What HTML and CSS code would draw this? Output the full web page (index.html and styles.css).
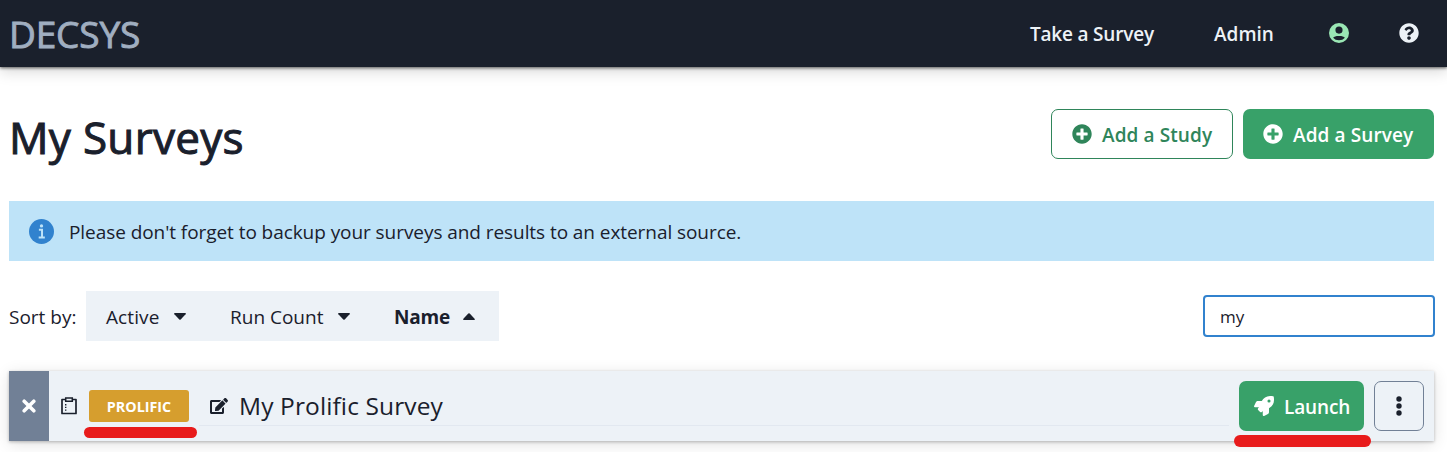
FILE: index.html
```html
<!DOCTYPE html>
<html lang="en">
<head>
<meta charset="utf-8">
<title>DECSYS</title>
<link rel="stylesheet" href="styles.css">
</head>
<body>
<header class="navbar">
  <a class="brand">DECSYS</a>
  <nav class="nav-links">
    <a class="nav-item take">Take a Survey</a>
    <a class="nav-item admin">Admin</a>
    <a class="nav-icon user"><svg class="icon20" viewBox="0 0 24 24"><path fill="currentColor" fill-rule="evenodd" d="M12 0a12 12 0 1 0 0 24 12 12 0 0 0 0-24zm0 4.200a4.300 4.300 0 1 1 0 8.600 4.300 4.300 0 0 1 0-8.600zM12 20.800c-3 0-5.300-1-7-3 1-1.500 3.200-2.200 7-2.200s6 .7 7 2.200c-1.700 2-4 3-7 3z"/></svg></a>
    <a class="nav-icon help"><svg class="icon20" viewBox="0 0 512 512"><path fill="currentColor" d="M504 256c0 136.997-111.043 248-248 248S8 392.997 8 256C8 119.083 119.043 8 256 8s248 111.083 248 248zM262.655 90c-54.497 0-89.255 22.957-116.549 63.758-3.536 5.286-2.353 12.415 2.715 16.258l34.699 26.310c5.205 3.947 12.621 3.008 16.665-2.122 17.864-22.658 30.113-35.797 57.303-35.797 20.429 0 45.698 13.148 45.698 32.958 0 14.976-12.363 22.667-32.534 33.976C247.128 238.528 216 254.941 216 296v4c0 6.627 5.373 12 12 12h56c6.627 0 12-5.373 12-12v-1.333c0-28.462 83.186-29.647 83.186-106.667 0-58.002-60.165-102-116.531-102zM256 338c-25.365 0-46 20.635-46 46 0 25.364 20.635 46 46 46s46-20.636 46-46c0-25.365-20.635-46-46-46z"/></svg></a>
  </nav>
</header>
<main class="page">
  <div class="title-row">
    <h1 class="title">My Surveys</h1>
    <div class="actions">
      <button class="btn btn-outline"><svg class="icon20" viewBox="0 0 512 512"><path fill="currentColor" d="M256 8C119 8 8 119 8 256s111 248 248 248 248-111 248-248S393 8 256 8zm144 276c0 6.600-5.400 12-12 12h-92v92c0 6.600-5.400 12-12 12h-56c-6.600 0-12-5.400-12-12v-92h-92c-6.600 0-12-5.400-12-12v-56c0-6.600 5.400-12 12-12h92v-92c0-6.600 5.400-12 12-12h56c6.600 0 12 5.400 12 12v92h92c6.600 0 12 5.400 12 12v56z"/></svg><span class="label-study">Add a Study</span></button>
      <button class="btn btn-solid"><svg class="icon20" viewBox="0 0 512 512"><path fill="currentColor" d="M256 8C119 8 8 119 8 256s111 248 248 248 248-111 248-248S393 8 256 8zm144 276c0 6.600-5.400 12-12 12h-92v92c0 6.600-5.400 12-12 12h-56c-6.600 0-12-5.400-12-12v-92h-92c-6.600 0-12-5.400-12-12v-56c0-6.600 5.400-12 12-12h92v-92c0-6.600 5.400-12 12-12h56c6.600 0 12 5.400 12 12v92h92c6.600 0 12 5.400 12 12v56z"/></svg><span class="label-survey">Add a Survey</span></button>
    </div>
  </div>
  <div class="alert">
    <svg class="info" viewBox="0 0 24 24"><circle cx="12" cy="12" r="12" fill="#3182ce"/><circle cx="12" cy="6.600" r="1.600" fill="#bee3f8"/><path d="M9.500 10.400h3v7.200M9.300 17.800h5.900" fill="none" stroke="#bee3f8" stroke-width="1.900"/></svg>
    <span class="alert-text">Please don't forget to backup your surveys and results to an external source.</span>
  </div>
  <div class="toolbar">
    <span class="sort-label">Sort by:</span>
    <div class="sort-group">
      <button class="sort s-active"><span>Active</span><svg class="caret" viewBox="0 0 12 7"><path fill="currentColor" d="M.7 0h10.600q1 .2.300 1.200L6.700 6.500q-.7.600-1.400 0L.4 1.200Q-.3.200.7 0z"/></svg></button>
      <button class="sort s-count"><span>Run Count</span><svg class="caret" viewBox="0 0 12 7"><path fill="currentColor" d="M.7 0h10.600q1 .2.300 1.200L6.700 6.500q-.7.600-1.400 0L.4 1.200Q-.3.200.7 0z"/></svg></button>
      <button class="sort s-name"><span>Name</span><svg class="caret" viewBox="0 0 12 7"><path fill="currentColor" d="M.7 7h10.600q1-.2.300-1.200L6.700.5q-.7-.6-1.400 0L.4 5.800Q-.3 6.800.7 7z"/></svg></button>
    </div>
    <input class="filter" type="text" value="my">
  </div>
  <div class="card">
    <div class="status"><svg class="cross" viewBox="0 0 14 14"><path d="M2.200 2.200l9.600 9.600M11.800 2.200l-9.600 9.600" stroke="#fff" stroke-width="3.600" stroke-linecap="round"/></svg></div>
    <svg class="clip" viewBox="0 0 16 18"><path d="M4.500 2.500H1v14h14v-14h-3.500" fill="none" stroke="currentColor" stroke-width="1.700" stroke-linejoin="round"/><path d="M4.700 1h6.600v3.200H4.700z" fill="none" stroke="currentColor" stroke-width="1.500"/><path d="M4.700 7v7.500" stroke="currentColor" stroke-width="1.400" stroke-dasharray="1.400 1.300"/></svg>
    <div class="badge-wrap"><span class="badge">PROLIFIC</span><i class="mark mark-badge"></i></div>
    <div class="name-field">
      <svg class="edit" viewBox="0 0 576 512"><path fill="currentColor" d="M402.600 83.200l90.200 90.200c3.800 3.800 3.800 10 0 13.800L274.400 405.600l-92.800 10.300c-12.400 1.400-22.900-9.100-21.500-21.500l10.300-92.800L388.800 83.200c3.800-3.800 10-3.800 13.800 0zm162-22.900l-48.800-48.800c-15.200-15.200-39.900-15.200-55.200 0l-35.400 35.400c-3.800 3.800-3.800 10 0 13.800l90.200 90.200c3.800 3.800 10 3.800 13.800 0l35.400-35.400c15.200-15.300 15.200-40 0-55.200zM384 346.200V448H64V128h229.800c3.200 0 6.200-1.300 8.500-3.500l40-40c7.600-7.600 2.200-20.500-8.500-20.500H48C21.500 64 0 85.500 0 112v352c0 26.500 21.500 48 48 48h352c26.500 0 48-21.500 48-48V306.200c0-10.700-12.900-16-20.500-8.500l-40 40c-2.200 2.300-3.500 5.300-3.500 8.500z"/></svg>
      <span class="survey-name">My Prolific Survey</span>
    </div>
    <div class="launch-wrap">
      <button class="btn btn-solid launch"><svg class="icon20" viewBox="0 0 512 512"><path fill="currentColor" fill-rule="evenodd" d="M505.120 19.090c-1.190-5.530-6.660-11-12.210-12.180C460.720 0 435.510 0 410.400 0 307.180 0 245.270 55.200 199.050 128H94.870c-16.290 0-35.600 11.930-42.880 26.500L2.580 253.290A28.400 28.400 0 0 0 0 264a24 24 0 0 0 24 24h103.840l-22.470 22.470c-11.370 11.360-13 32.250 0 45.250l50.900 50.910c11.160 11.180 32.170 13.160 45.270 0l22.470-22.470V488a24 24 0 0 0 24 24 28.600 28.600 0 0 0 10.700-2.580l98.700-49.390c14.560-7.280 26.500-26.570 26.500-42.860V312.800C456.500 266.500 512 204.400 512 101.800c.1-25.200.1-50.400-6.880-82.710zM384 168a40 40 0 1 1 0-80 40 40 0 0 1 0 80z"/></svg><span class="label-launch">Launch</span></button><i class="mark mark-launch"></i>
    </div>
    <button class="more"><svg class="dots" viewBox="0 0 6 20" fill="currentColor"><circle cx="3" cy="3" r="2.700"/><circle cx="3" cy="10" r="2.700"/><circle cx="3" cy="17" r="2.700"/></svg></button>
  </div>
</main>
</body>
</html>
```
FILE: styles.css
```css
* { box-sizing: border-box; }
body {
  margin: 0;
  height: 452px;
  overflow: hidden;
  background: #fff;
  color: #1a202c;
  font: 400 19px/30px "Open Sans", "Noto Sans", sans-serif;
}
svg { display: block; flex: none; }
button { font: inherit; color: inherit; border: 0; margin: 0; padding: 0; background: none; white-space: nowrap; }
span, a, h1 { white-space: nowrap; }
.navbar {
  height: 67px;
  padding: 0 28px 0 9px;
  display: flex;
  align-items: center;
  justify-content: space-between;
  background: #1a202c;
  box-shadow: 0 1px 3px rgba(0,0,0,.6), 0 4px 14px rgba(0,0,0,.17);
}
.brand { color: #a0aec0; font-size: 37px; -webkit-text-stroke: .9px currentColor; letter-spacing: -.15px; }
.nav-links { display: flex; align-items: center; color: #edf2f7; font-weight: 600; }
.nav-item { padding-top: 1px; }
.take { width: 124px; margin-right: 60px; letter-spacing: -.2px; }
.admin { width: 60px; margin-right: 55px; }
.nav-icon { padding-bottom: 1px; }
.user { color: #9ae6b4; margin-right: 50px; }
.icon20 { width: 20px; height: 20px; }
.page { padding: 42px 13px 0 9px; }
.title-row { display: flex; justify-content: space-between; height: 50px; }
.title { margin: 0; font-size: 44px; font-weight: 400; line-height: 56px; letter-spacing: .3px; -webkit-text-stroke: 1px currentColor; }
.actions { display: flex; gap: 10px; }
.btn { display: flex; align-items: center; gap: 10px; height: 50px; padding: 0 20px; border-radius: 7px; font-weight: 600; }
.btn span { padding-top: 2px; }
.label-study, .label-survey { letter-spacing: .1px; }
.btn-outline { width: 182px; padding: 0 19px 0 20px; border: 1px solid #2f855a; color: #2f855a; }
.btn-solid { width: 191px; background: #38a169; color: #fff; }
.alert { margin-top: 42px; height: 60px; padding: 0 20px; display: flex; align-items: center; gap: 15px; background: #bee3f8; }
.info { width: 25px; height: 25px; }
.alert-text { padding-top: 2px; letter-spacing: -.065px; }
.toolbar { margin-top: 30px; height: 50px; display: flex; align-items: center; }
.sort-label { width: 77px; padding-top: 2px; }
.sort-group { width: 413px; height: 50px; background: #edf2f7; display: flex; }
.sort { display: flex; align-items: center; padding-left: 20px; }
.sort span { padding-top: 2px; }
.s-active { width: 124px; letter-spacing: .1px; }
.s-count { width: 164px; }
.s-name { width: 125px; font-weight: 700; letter-spacing: -.2px; }
.s-active span { width: 68px; text-align: left; }
.s-count span { width: 108px; text-align: left; }
.s-name span { width: 69px; text-align: left; }
.caret { width: 12px; height: 7px; }
.filter {
  margin: 0 -1px 0 auto;
  width: 232px;
  height: 42px;
  padding: 0 15px;
  border: 2px solid #3182ce;
  border-radius: 4px;
  outline: 0;
  background: #fff;
  color: #1a202c;
  font: 400 17px "Open Sans", "Noto Sans", sans-serif;
}
.card {
  margin-top: 30px;
  height: 70px;
  display: flex;
  align-items: center;
  padding-right: 10px;
  background: #edf2f7;
  box-shadow: 0 1px 3px rgba(0,0,0,.25), 0 3px 15px rgba(0,0,0,.12);
}
.status { width: 40px; height: 70px; background: #718096; display: flex; align-items: center; justify-content: center; }
.cross { width: 14px; height: 14px; }
.clip { width: 16px; height: 18px; margin: 0 12px; }
.badge-wrap, .launch-wrap { position: relative; }
.badge { display: flex; align-items: center; justify-content: center; width: 100px; height: 32px; padding-top: 1px; border-radius: 3px; background: #d69e2e; color: #fff; font-size: 14.300px; font-weight: 700; }
.mark { position: absolute; background: #e81b1b; border-radius: 6px; }
.mark-badge { left: -5px; top: 37px; width: 113px; height: 11px; }
.mark-launch { left: -5px; top: 54px; width: 137px; height: 12px; }
.name-field { flex: 1; margin: 0 10px; height: 40px; border-bottom: 1px solid #e2e8f0; display: flex; align-items: center; padding-left: 11px; }
.edit { width: 18px; height: 16px; margin-right: 11px; }
.survey-name { font-size: 24.500px; letter-spacing: .12px; }
.launch { width: 125px; padding: 0 15px; letter-spacing: -.15px; }
.more { width: 50px; height: 50px; margin-left: 10px; border: 1px solid #718096; border-radius: 7px; display: flex; align-items: center; justify-content: center; }
.dots { width: 6px; height: 20px; }
```
